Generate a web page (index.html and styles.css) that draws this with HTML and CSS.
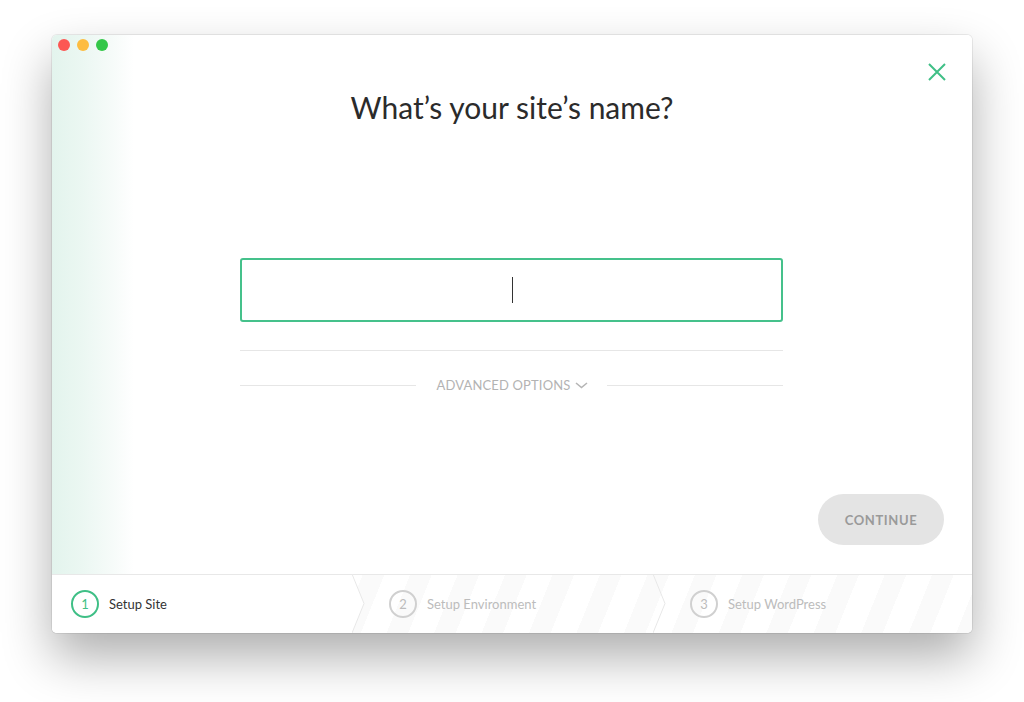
FILE: index.html
```html
<!DOCTYPE html>
<html lang="en">
<head>
<meta charset="utf-8">
<title>Setup Site</title>
<link rel="stylesheet" href="styles.css">
</head>
<body>
<div class="window">
  <div class="main">
    <div class="dots">
      <span class="dot red"></span>
      <span class="dot yellow"></span>
      <span class="dot green"></span>
    </div>
    <button class="close" aria-label="Close">
      <svg width="18" height="18" viewBox="0 0 18 18"><path d="M1 1 L17 17 M17 1 L1 17" stroke="#3fbf86" stroke-width="2" fill="none"/></svg>
    </button>
    <h1 class="title">What’s your site’s name?</h1>
    <div class="column">
      <div class="input"><span class="caret"></span></div>
      <div class="divider"></div>
      <div class="advanced">
        <span class="line"></span>
        <span class="adv-label">ADVANCED OPTIONS
          <svg width="13" height="7" viewBox="0 0 13 7"><path d="M1 1 L6.5 5.5 L12 1" stroke="#b5b5b5" stroke-width="1.6" fill="none"/></svg>
        </span>
        <span class="line"></span>
      </div>
    </div>
    <button class="continue">CONTINUE</button>
  </div>
  <div class="footer">
    <div class="step step-1 active">
      <span class="num">1</span><span class="label">Setup Site</span>
      <svg class="chev" width="14" height="59" viewBox="0 0 14 59"><polygon points="0,0 12,29.5 0,59" fill="#fff"/><polyline points="0,0 12,29.5 0,59" fill="none" stroke="#e8e8e8" stroke-width="1"/></svg>
    </div>
    <div class="step step-2">
      <span class="num">2</span><span class="label">Setup Environment</span>
      <svg class="chev" width="14" height="59" viewBox="0 0 14 59"><polyline points="0,0 12,29.5 0,59" fill="none" stroke="#e8e8e8" stroke-width="1"/></svg>
    </div>
    <div class="step step-3">
      <span class="num">3</span><span class="label">Setup WordPress</span>
    </div>
  </div>
</div>
</body>
</html>
```

FILE: styles.css
```css
* { box-sizing: border-box; }
html, body { margin: 0; padding: 0; background: #fff; }
body {
  width: 1024px;
  height: 702px;
  padding: 35px 0 0 52px;
  font-family: Lato, "Open Sans", sans-serif;
  overflow: hidden;
}
.window {
  width: 920px;
  height: 598px;
  background: #fff;
  border-radius: 5px;
  box-shadow: 0 0 0 1px rgba(0,0,0,0.07), 0 24px 50px rgba(0,0,0,0.32);
  display: flex;
  flex-direction: column;
  overflow: hidden;
}
.main {
  position: relative;
  height: 539px;
  display: flex;
  flex-direction: column;
  background: linear-gradient(90deg, #e3f4ed 0px, #ebf7f2 30px, #f6fbf9 60px, #fff 82px);
}
.dots {
  display: flex;
  gap: 7px;
  padding: 4px 0 0 6px;
  height: 16px;
}
.dot { width: 12px; height: 12px; border-radius: 50%; display: block; }
.red { background: #fc5753; }
.yellow { background: #fdbc40; }
.green { background: #33c748; }
.close {
  position: absolute;
  top: 28px;
  right: 26px;
  width: 18px;
  height: 18px;
  padding: 0;
  border: 0;
  background: none;
}
.close svg { display: block; }
.title {
  margin: 38px 0 0;
  text-align: center;
  font-size: 30px;
  line-height: 36px;
  font-weight: 400;
  color: #2b2b2b;
}
.column {
  width: 543px;
  margin: 133px auto 0 188px;
  display: flex;
  flex-direction: column;
}
.input {
  height: 64px;
  border: 2px solid #45c18b;
  border-radius: 3px;
  display: flex;
  align-items: center;
  justify-content: center;
}
.caret {
  width: 1px;
  height: 26px;
  background: #333;
  margin-left: 1px;
}
.divider {
  margin-top: 28px;
  height: 1px;
  background: #e6e6e6;
}
.advanced {
  margin-top: 26px;
  display: flex;
  align-items: center;
  height: 16px;
}
.line { flex: 1; height: 1px; background: #e6e6e6; }
.adv-label {
  padding: 0 19px 0 21px;
  font-size: 13px;
  letter-spacing: 0.15px;
  color: #b3b3b3;
  display: flex;
  align-items: center;
  gap: 5px;
  line-height: 16px;
}
.adv-label svg { display: block; margin-top: 1px; }
.continue {
  margin-top: auto;
  margin-bottom: 29px;
  align-self: flex-end;
  margin-right: 28px;
  width: 126px;
  height: 51px;
  border-radius: 26px;
  border: 0;
  background: #e4e4e4;
  color: #9a9a9a;
  font-family: Lato, "Open Sans", sans-serif;
  font-size: 13px;
  font-weight: 700;
  letter-spacing: 0.6px;
}
.footer {
  height: 59px;
  border-top: 1px solid #e8e8e8;
  display: flex;
  background: repeating-linear-gradient(112deg, #fff 0 24px, #fafafa 24px 44px);
}
.step {
  position: relative;
  display: flex;
  align-items: center;
  font-size: 13px;
  color: #bcbcbc;
}
.step-1 { width: 300px; padding-left: 19px; background: #fff; color: #333; z-index: 2; }
.step-2 { width: 301px; padding-left: 37px; z-index: 1; }
.step-3 { flex: 1; padding-left: 37px; }
.num {
  width: 28px;
  height: 28px;
  border-radius: 50%;
  border: 2px solid #d0d0d0;
  display: flex;
  align-items: center;
  justify-content: center;
  font-size: 13px;
  color: #bcbcbc;
  margin-right: 10px;
  background: transparent;
}
.active .num { border-color: #3fbf86; color: #3fbf86; }
.chev {
  position: absolute;
  right: -14px;
  top: -1px;
  display: block;
}
```
